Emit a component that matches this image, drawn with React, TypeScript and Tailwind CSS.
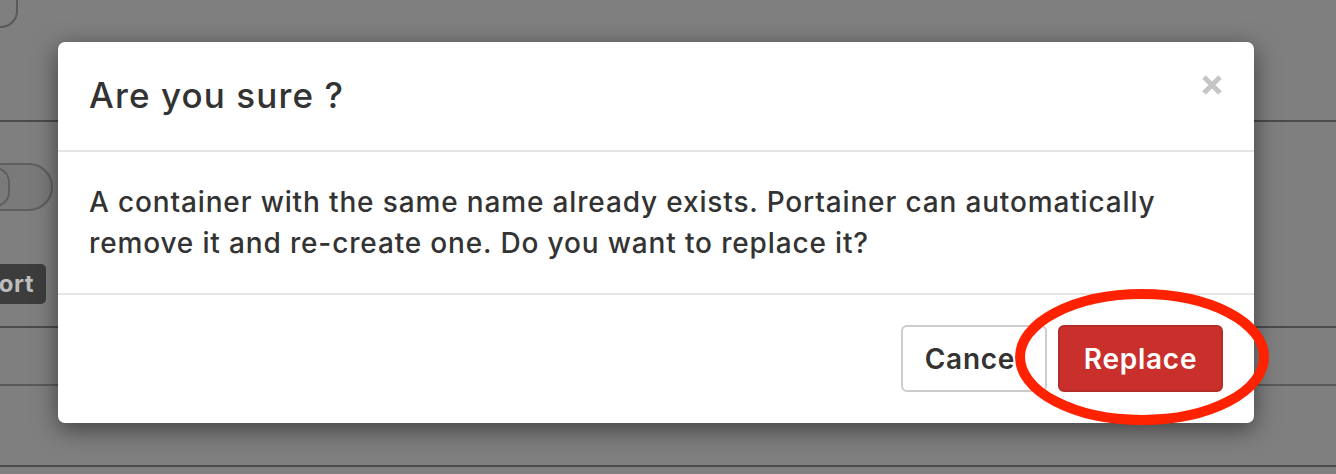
import React from "react";

export default function App() {
  return (
    <div className="relative w-[1336px] h-[474px] overflow-hidden bg-[#7f7f7f]" style={{ fontFamily: "Inter, 'Noto Sans', sans-serif" }}>
      {/* background page */}
      <div className="absolute inset-0 flex flex-col">
        <div className="h-[122px] border-b-2 border-[#4b4b4b] relative">
          <div className="absolute left-[-16px] top-[-18px] w-[34px] h-[46px] rounded-full border-2 border-[#5a5a5a]" />
        </div>
        <div className="h-[206px] border-b-2 border-[#4b4b4b] relative">
          <div className="absolute left-[-20px] top-[41px] w-[73px] h-[48px] rounded-full border-2 border-[#5f5f5f] bg-[#7a7a7a]">
            <div className="absolute left-[-2px] top-[2px] w-[30px] h-[40px] rounded-full border-2 border-[#5f5f5f]" />
          </div>
          <div className="absolute left-[-10px] top-[142px] w-[56px] h-[40px] rounded-[5px] bg-[#3d3d3d] flex items-center justify-end pr-[12px] text-[#bdbdbd] font-bold text-[24px] tracking-[0.5px]">ort</div>
        </div>
        <div className="h-[58px] border-b-2 border-[#5a5a5a]" />
        <div className="h-[81px] border-b-2 border-[#4b4b4b]" />
      </div>

      {/* modal */}
      <div className="absolute left-[58px] top-[42px] w-[1196px] h-[381px] bg-white rounded-[7px] shadow-[0_6px_24px_rgba(0,0,0,0.5)] flex flex-col text-[#333]">
        <div className="h-[110px] border-b-2 border-[#e5e5e5] flex items-center justify-between pl-[31px] pr-[32px]">
          <div className="text-[35px] font-medium tracking-[1.1px] pb-[2px]">Are you sure ?</div>
          <svg width="20" height="20" viewBox="0 0 20 20" className="mb-[22px]">
            <path d="M2 2 L18 18 M18 2 L2 18" stroke="#c6c6c6" strokeWidth="5" strokeLinecap="butt" />
          </svg>
        </div>
        <div className="h-[143px] border-b-2 border-[#e5e5e5] pl-[31px] pt-[30px] text-[28px] font-medium leading-[41px] tracking-[0.85px]">
          <p>A container with the same name already exists. Portainer can automatically</p>
          <p>remove it and re-create one. Do you want to replace it?</p>
        </div>
        <div className="flex-1 flex items-center justify-end gap-[11px] pr-[31px] pb-[1px]">
          <button className="w-[146px] h-[67px] rounded-[6px] border-2 border-[#cccccc] bg-white text-[28px] font-semibold tracking-[0.75px] text-[#333]">Cancel</button>
          <button className="w-[165px] h-[67px] rounded-[6px] border-2 border-[#b52b27] bg-[#c9302c] text-[28px] font-semibold tracking-[0.75px] text-white">Replace</button>
        </div>
      </div>

      {/* annotation ellipse */}
      <svg className="absolute left-0 top-0" width="1336" height="474">
        <ellipse cx="1142" cy="357" rx="122" ry="63" fill="none" stroke="#ff2200" strokeWidth="10" />
      </svg>
    </div>
  );
}
